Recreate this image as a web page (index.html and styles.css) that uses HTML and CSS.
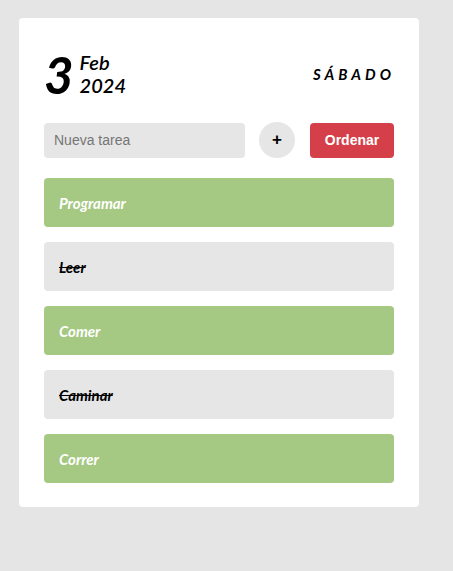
FILE: index.html
```html
<!DOCTYPE html>
<html lang="es">
<head>
<meta charset="utf-8">
<link rel="stylesheet" href="styles.css">
</head>
<body>
<div class="card">
  <div class="header">
    <div class="date">
      <span class="day">3</span>
      <div class="monthyear">
        <span>Feb</span>
        <span>2024</span>
      </div>
    </div>
    <div class="weekday">SÁBADO</div>
  </div>
  <div class="form">
    <input class="input" type="text" placeholder="Nueva tarea">
    <button class="add">+</button>
    <button class="order">Ordenar</button>
  </div>
  <div class="list">
    <div class="task todo">Programar</div>
    <div class="task done">Leer</div>
    <div class="task todo">Comer</div>
    <div class="task done">Caminar</div>
    <div class="task todo">Correr</div>
  </div>
</div>
</body>
</html>
```
FILE: styles.css
```css
html, body {
  margin: 0;
  padding: 0;
  background: #e5e5e5;
}
body {
  padding: 18px 19px;
  font-family: "Lato", sans-serif;
}
.card {
  width: 400px;
  box-sizing: border-box;
  background: #fff;
  border-radius: 4px;
  padding: 25px 25px 24px;
}
.header {
  display: flex;
  justify-content: space-between;
  align-items: center;
  height: 62px;
  margin-bottom: 17px;
}
.date {
  display: flex;
  align-items: center;
  gap: 6px;
}
.day {
  font-family: "Lato", sans-serif;
  font-size: 51px;
  line-height: 1;
  font-weight: 700;
  font-style: italic;
}
.monthyear {
  display: flex;
  flex-direction: column;
  font-style: italic;
  font-weight: 600;
  font-size: 20px;
  line-height: 23px;
}
.weekday {
  font-style: italic;
  font-weight: 700;
  font-size: 15px;
  letter-spacing: 4px;
  margin-right: -1px;
}
.form {
  display: flex;
  align-items: center;
  margin-bottom: 20px;
}
.input {
  width: 201px;
  height: 35px;
  box-sizing: border-box;
  border: none;
  border-radius: 4px;
  background: #e6e6e6;
  padding: 0 10px;
  font-family: "Liberation Sans", Arial, sans-serif;
  font-size: 14px;
  outline: none;
}
.input::placeholder {
  color: #757575;
}
.add {
  width: 36px;
  height: 36px;
  border-radius: 50%;
  border: none;
  background: #e6e6e6;
  margin-left: 14px;
  font-family: "Liberation Sans", Arial, sans-serif;
  font-weight: 700;
  font-size: 17px;
  padding: 0;
  color: #000;
}
.order {
  margin-left: auto;
  width: 84px;
  height: 35px;
  border: none;
  border-radius: 4px;
  background: #d43f4a;
  color: #fff;
  font-family: "Liberation Sans", Arial, sans-serif;
  font-weight: 700;
  font-size: 14px;
  padding: 0;
}
.list {
  display: flex;
  flex-direction: column;
  gap: 15px;
}
.task {
  height: 49px;
  box-sizing: border-box;
  border-radius: 4px;
  padding: 0 15px;
  display: flex;
  align-items: center;
  font-style: italic;
  font-weight: 700;
  font-size: 15px;
}
.todo {
  background: #a5c882;
  color: #fff;
}
.done {
  background: #e6e6e6;
  color: #000;
  text-decoration: line-through;
}
```
